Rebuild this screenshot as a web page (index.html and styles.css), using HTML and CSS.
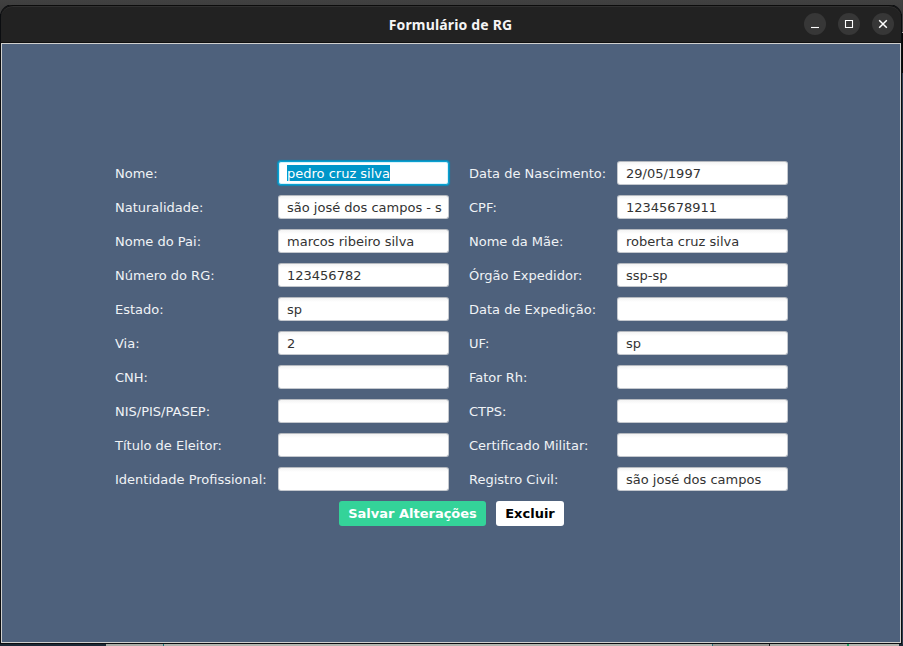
FILE: index.html
```
<!DOCTYPE html>
<html lang="pt-BR">
<head>
<meta charset="utf-8">
<title>Formulário de RG</title>
<link rel="stylesheet" href="styles.css">
</head>
<body>
<main class="window">
  <header class="titlebar">
    <h1 class="title">Formulário de RG</h1>
    <div class="controls">
      <span class="control"><svg viewBox="0 0 22 22"><path d="M7 14.5h8"/></svg></span>
      <span class="control"><svg viewBox="0 0 22 22"><path d="M7.5 7.5h7v7h-7z"/></svg></span>
      <span class="control"><svg viewBox="0 0 22 22"><path d="M7.2 7.2l7.6 7.6M14.8 7.2l-7.6 7.6" stroke-width="1.5"/></svg></span>
    </div>
  </header>
  <section class="content">
    <div class="form">
      <div class="label">Nome:</div><div class="field focused"><span class="selected">pedro cruz silva</span></div>
      <div class="label">Data de Nascimento:</div><div class="field">29/05/1997</div>
      <div class="label">Naturalidade:</div><div class="field">são josé dos campos - s</div>
      <div class="label">CPF:</div><div class="field">12345678911</div>
      <div class="label">Nome do Pai:</div><div class="field">marcos ribeiro silva</div>
      <div class="label">Nome da Mãe:</div><div class="field">roberta cruz silva</div>
      <div class="label">Número do RG:</div><div class="field">123456782</div>
      <div class="label">Órgão Expedidor:</div><div class="field">ssp-sp</div>
      <div class="label">Estado:</div><div class="field">sp</div>
      <div class="label">Data de Expedição:</div><div class="field"></div>
      <div class="label">Via:</div><div class="field">2</div>
      <div class="label">UF:</div><div class="field">sp</div>
      <div class="label">CNH:</div><div class="field"></div>
      <div class="label">Fator Rh:</div><div class="field"></div>
      <div class="label">NIS/PIS/PASEP:</div><div class="field"></div>
      <div class="label">CTPS:</div><div class="field"></div>
      <div class="label">Título de Eleitor:</div><div class="field"></div>
      <div class="label">Certificado Militar:</div><div class="field"></div>
      <div class="label">Identidade Profissional:</div><div class="field"></div>
      <div class="label">Registro Civil:</div><div class="field">são josé dos campos</div>
    </div>
    <div class="actions">
      <button class="button save">Salvar Alterações</button>
      <button class="button delete">Excluir</button>
    </div>
  </section>
</main>
</body>
</html>
```
FILE: styles.css
```
* { box-sizing: border-box; }

body {
  margin: 0;
  height: 646px;
  padding: 5px 2px 3px 1px;
  overflow: hidden;
  font: 13px/16px "DejaVu Sans", sans-serif;
  background:
    linear-gradient(90deg, #1b2936 106px, #a9aca6 106px 163px, #16767e 163px 164px, #b1b4ae 164px 712px, #2c7280 712px 713px, #969893 713px 769px, #222 769px 770px, #a9aca6 770px 847px, #20a060 847px 849px, #b1b4ae 849px 899px, #1b2936 899px) 0 644px / 903px 2px no-repeat,
    linear-gradient(#3d3d3d 32px, #aaa 32px 33px, #080808 33px 73px, #2d3b4d 73px) 902px 0 / 1px 646px no-repeat,
    linear-gradient(#414141, #393939) 0 0 / 903px 14px no-repeat,
    #090b0e;
}

.window {
  display: flex;
  flex-direction: column;
  height: 638px;
  border-radius: 12px 12px 0 0;
  box-shadow: 0 0 0 1px #0b0d10;
  clip-path: inset(0 -1px -1px -1px);
}

.titlebar {
  display: grid;
  grid-template-columns: 1fr auto 1fr;
  align-items: center;
  height: 38px;
  flex: none;
  padding-right: 7px;
  border-top: 1px solid #0c0c0c;
  border-bottom: 1px solid #101010;
  border-radius: 12px 12px 0 0;
  background: #222;
  box-shadow: inset 0 1px #303030;
}

.title {
  grid-column: 2;
  margin: 2px 0 0 6px;
  color: #f5f5f5;
  font: bold 14px/20px "Noto Sans", sans-serif;
  letter-spacing: 0.17px;
}

.controls { display: flex; justify-content: flex-end; gap: 12px; }

.control {
  width: 22px;
  height: 22px;
  border-radius: 50%;
  background: #373737;
}

.control svg {
  display: block;
  width: 22px;
  height: 22px;
  fill: none;
  stroke: #fff;
  stroke-width: 1.1;
}

.content {
  flex: 1;
  display: flex;
  flex-direction: column;
  align-items: center;
  justify-content: center;
  gap: 10px;
  padding-left: 1px;
  border: 1px solid #d0d0ce;
  background: #4e617c;
}

.form {
  display: grid;
  grid-template-columns: 153px 171px 148px 171px;
  grid-auto-rows: 24px;
  gap: 10px;
}

.label {
  padding-top: 5px;
  color: #f0f3f6;
  white-space: nowrap;
}

.label:nth-child(4n + 3) { padding-left: 10px; }

.field {
  padding: 4px 8px;
  border: 1px solid #c4c8ce;
  border-top-color: #b5b9bf;
  border-radius: 3px;
  background: linear-gradient(#f3f3f3, #fff 4px);
  color: #333;
  line-height: 15px;
  white-space: nowrap;
}

.focused {
  padding-top: 3px;
  border-color: #0aa0d0;
  background: #fff;
  box-shadow: 0 0 1px 1px #078fbe, inset 0 0 0 1px #d6f2fb;
}

.selected {
  display: block;
  width: max-content;
  height: 16px;
  padding-top: 1px;
  line-height: 15px;
  background: #0096c9;
  color: #fff;
}

.actions { display: flex; gap: 10px; }

.button {
  height: 25px;
  padding: 0;
  border: 0;
  border-radius: 3px;
  font: bold 13px/25px "DejaVu Sans", sans-serif;
}

.save { width: 147px; background: #34d399; color: #fff; }
.delete { width: 68px; background: #fff; color: #000; }
```
